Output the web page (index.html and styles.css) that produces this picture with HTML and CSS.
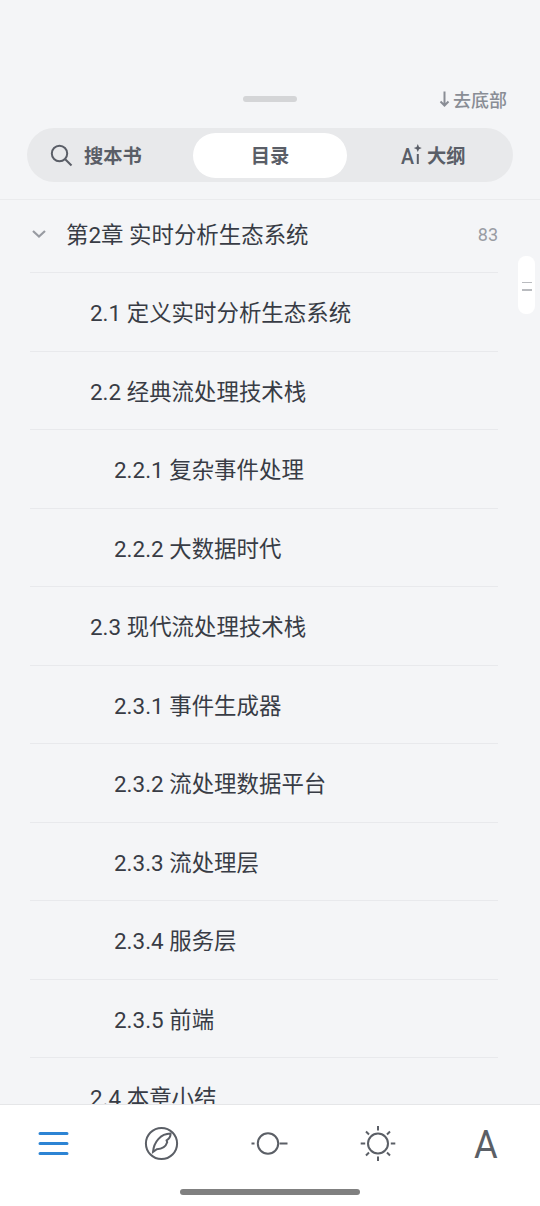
FILE: index.html
```
<!DOCTYPE html>
<html lang="zh-CN">
<head>
  <meta charset="UTF-8">
  <title>目录</title>
  <link rel="stylesheet" href="styles.css">
</head>
<body>
  <div class="page">
    <header class="header">
      <div class="top-bar">
        <span class="handle"></span>
        <div class="to-bottom">
          <svg width="11" height="18" viewBox="0 0 11 18"><path d="M5.5 1.5V15M1.5 11.5L5.5 15.5L9.5 11.5" /></svg>
          <span>去底部</span>
        </div>
      </div>
      <div class="tabs">
        <div class="tab tab-search">
          <svg class="search-icon" width="24" height="24" viewBox="0 0 24 24"><circle cx="9.5" cy="9.5" r="7.7" /><path d="M15.2 15.2L21.5 21.5" /></svg>
          <span>搜本书</span>
        </div>
        <div class="tab tab-active">目录</div>
        <div class="tab tab-outline">
          <svg class="ai-icon" width="22" height="24" viewBox="0 0 22 24">
            <text x="0" y="21" textLength="13" lengthAdjust="spacingAndGlyphs">A</text>
            <path class="stem" d="M16.8 11V21" />
            <path class="spark" d="M16.8 1L18 4L20.8 5.1L18 6.2L16.8 9L15.6 6.2L12.8 5.1L15.6 4Z" />
          </svg>
          <span>大纲</span>
        </div>
      </div>
    </header>

    <main class="toc">
      <div class="row chapter">
        <svg class="chevron" width="16" height="10" viewBox="0 0 16 10"><path d="M2 2L8 7.5L14 2" /></svg>
        <span>第2章 实时分析生态系统</span>
        <span class="count">83</span>
      </div>
      <div class="row level-2">2.1 定义实时分析生态系统</div>
      <div class="row level-2">2.2 经典流处理技术栈</div>
      <div class="row level-3">2.2.1 复杂事件处理</div>
      <div class="row level-3">2.2.2 大数据时代</div>
      <div class="row level-2">2.3 现代流处理技术栈</div>
      <div class="row level-3">2.3.1 事件生成器</div>
      <div class="row level-3">2.3.2 流处理数据平台</div>
      <div class="row level-3">2.3.3 流处理层</div>
      <div class="row level-3">2.3.4 服务层</div>
      <div class="row level-3">2.3.5 前端</div>
      <div class="row level-2">2.4 本章小结</div>
    </main>

    <div class="scroll-thumb"><i></i><i></i></div>

    <footer class="footer">
      <nav class="nav">
        <div class="nav-item active">
          <svg width="40" height="40" viewBox="0 0 40 40"><path d="M6 9.5H33M6 19.5H33M6 29.5H33" /></svg>
        </div>
        <div class="nav-item">
          <svg width="40" height="40" viewBox="0 0 40 40"><circle cx="19.5" cy="19.5" r="15.6" /><path d="M11 28C11.8 18 18.5 9.8 28.6 9.6C28.6 12.4 27.4 14.8 24.6 16.4L25.2 18.2C23.8 22.6 20 25 14.8 25.2Z" /></svg>
        </div>
        <div class="nav-item">
          <svg width="40" height="40" viewBox="0 0 40 40"><circle cx="18" cy="19.5" r="10.2" /><path d="M1.5 19.5H4.5M29.5 19.5H37.5" /></svg>
        </div>
        <div class="nav-item">
          <svg width="40" height="40" viewBox="0 0 40 40"><circle cx="20" cy="19.5" r="10" /><path d="M20 2V6.5M20 32.5V37M2.7 19.5H7.2M32.8 19.5H37.3M8 7.5L11 10.5M29 28.5L32 31.5M32 7.5L29 10.5M11 28.5L8 31.5" /></svg>
        </div>
        <div class="nav-item font-item"><span>A</span></div>
      </nav>
      <div class="home-bar"></div>
    </footer>
  </div>
</body>
</html>
```
FILE: styles.css
```
* {
  box-sizing: border-box;
}
body {
  margin: 0;
  background: #f4f5f7;
  font-family: Roboto, "Noto Sans CJK SC", sans-serif;
  color: #383c45;
}
svg {
  display: block;
  flex: none;
  fill: none;
  stroke: currentColor;
  overflow: visible;
}
.page {
  position: relative;
  display: flex;
  flex-direction: column;
  height: 1206px;
  overflow: hidden;
}
.header {
  flex: none;
  height: 200px;
  padding: 83px 27px 0;
  border-bottom: 1px solid #eaebed;
}
.top-bar {
  display: grid;
  grid-template-columns: 1fr 54px 1fr;
  align-items: center;
  height: 31px;
}
.handle {
  grid-column: 2;
  height: 6px;
  border-radius: 3px;
  background: #d4d5d7;
}
.to-bottom {
  display: flex;
  align-items: center;
  justify-content: flex-end;
  gap: 3px;
  padding-right: 6px;
  font-size: 18px;
  font-weight: 500;
  color: #898d95;
}
.to-bottom svg {
  stroke-width: 2;
}
.tabs {
  display: grid;
  grid-template-columns: 161px 154px 1fr;
  height: 54px;
  margin-top: 14px;
  padding: 5px;
  border-radius: 27px;
  background: #e8e9eb;
}
.tab {
  display: flex;
  align-items: center;
  height: 45px;
  padding-bottom: 2px;
  font-size: 19.3px;
  font-weight: 700;
  color: #5a5e67;
}
.tab-search {
  gap: 10px;
  padding-left: 18px;
}
.search-icon {
  margin-top: 2px;
  stroke-width: 2;
}
.tab-active {
  justify-content: center;
  border-radius: 23px;
  background: #fff;
}
.tab-outline {
  gap: 4px;
  padding-left: 54px;
}
.ai-icon text {
  font-size: 22.5px;
  font-weight: 500;
  fill: currentColor;
  stroke: none;
}
.ai-icon .stem {
  stroke-width: 2;
}
.ai-icon .spark {
  fill: currentColor;
  stroke: none;
}
.toc {
  flex: 1;
  min-height: 0;
  overflow: hidden;
  padding: 0 42px 0 30px;
}
.row {
  display: flex;
  align-items: center;
  height: 78.5px;
  padding-top: 3px;
  border-bottom: 1px solid #e8e9ec;
  font-size: 22.45px;
  line-height: 34px;
  white-space: nowrap;
}
.chapter {
  height: 73px;
  padding: 0 0 2px;
}
.level-2 {
  padding-left: 60px;
}
.level-3 {
  padding-left: 84px;
}
.chevron {
  margin: 0 19px 3px 1px;
  color: #989ba2;
  stroke-width: 2.2;
}
.count {
  margin-left: auto;
  font-size: 18px;
  color: #999ca3;
}
.scroll-thumb {
  position: absolute;
  top: 256px;
  right: 5px;
  display: flex;
  flex-direction: column;
  align-items: center;
  justify-content: center;
  gap: 6px;
  width: 17px;
  height: 58px;
  padding-top: 2px;
  border-radius: 8px;
  background: #fff;
}
.scroll-thumb i {
  width: 10px;
  height: 1.5px;
  background: #b9bbbf;
}
.footer {
  flex: none;
  height: 102px;
  border-top: 1px solid #e5e6e8;
  background: #fff;
}
.nav {
  display: grid;
  grid-template-columns: repeat(5, 1fr);
  height: 78px;
}
.nav-item {
  display: flex;
  align-items: center;
  justify-content: center;
  color: #5b5f66;
}
.nav-item svg {
  stroke-width: 2;
}
.nav-item.active {
  color: #2d84d4;
}
.nav-item.active svg {
  stroke-width: 3;
  stroke-linecap: round;
}
.font-item {
  padding-top: 1px;
  font-size: 39px;
  line-height: 40px;
}
.font-item span {
  transform: scaleX(0.93);
}
.home-bar {
  width: 180px;
  height: 6px;
  margin: 6px auto 0;
  border-radius: 3px;
  background: #808080;
}
```
